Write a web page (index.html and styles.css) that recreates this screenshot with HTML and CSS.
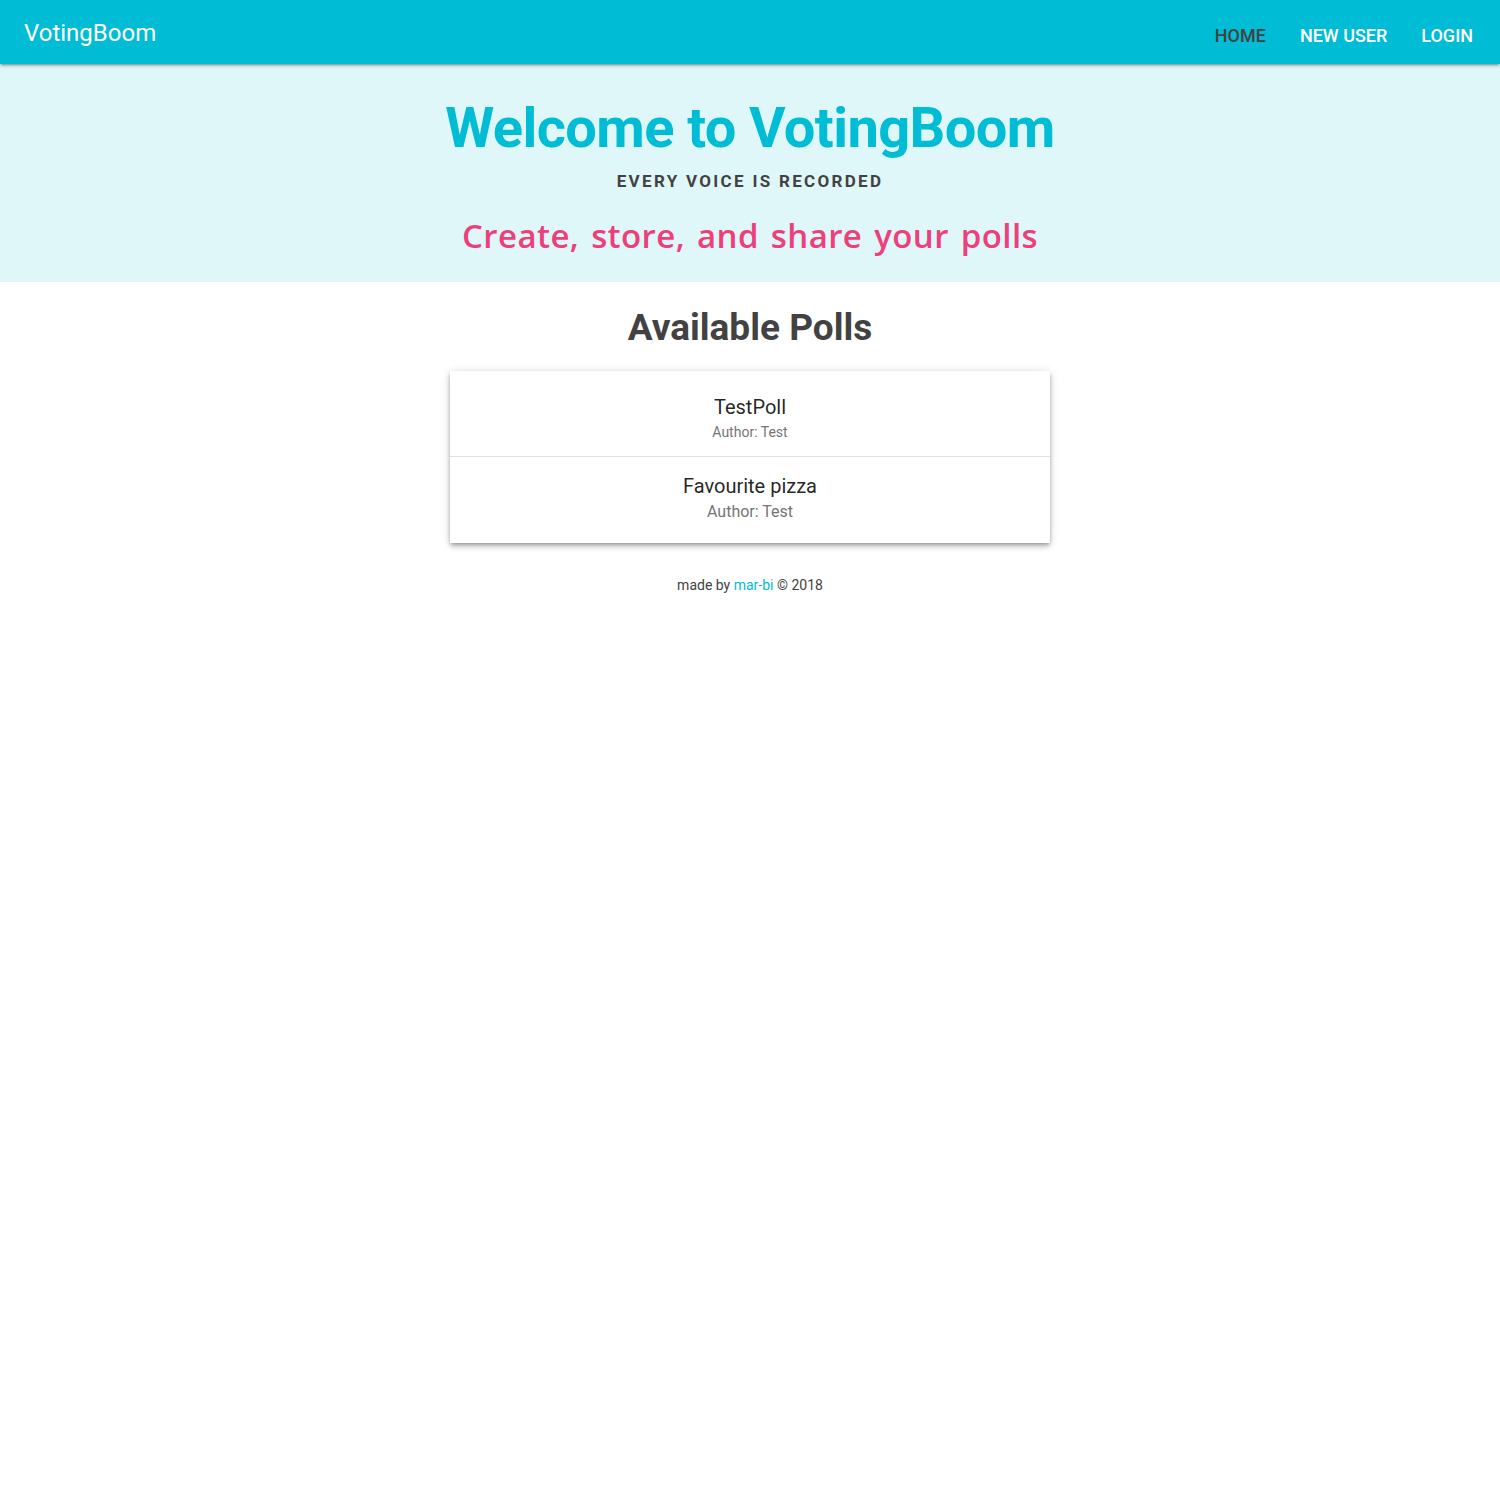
FILE: index.html
```html
<!DOCTYPE html>
<html>
<head>
<meta charset="utf-8">
<link rel="stylesheet" href="styles.css">
</head>
<body>
<nav class="navbar">
  <a class="brand" href="#">VotingBoom</a>
  <ul class="nav-links">
    <li><a class="active" href="#">HOME</a></li>
    <li><a href="#">NEW USER</a></li>
    <li><a href="#">LOGIN</a></li>
  </ul>
</nav>
<header class="hero">
  <h1 class="hero-title">Welcome to VotingBoom</h1>
  <p class="hero-sub">EVERY VOICE IS RECORDED</p>
  <p class="hero-tag">Create, store, and share your polls</p>
</header>
<main class="main">
  <h2 class="section-title">Available Polls</h2>
  <ul class="poll-list">
    <li class="poll-item">
      <div class="poll-name">TestPoll</div>
      <div class="poll-author small">Author: Test</div>
    </li>
    <li class="poll-item">
      <div class="poll-name">Favourite pizza</div>
      <div class="poll-author">Author: Test</div>
    </li>
  </ul>
  <footer class="footer">made by <a href="#">mar-bi</a> © 2018</footer>
</main>
</body>
</html>
```
FILE: styles.css
```css
* { box-sizing: border-box; }
html, body { margin: 0; padding: 0; background: #fff; }
body { font-family: Roboto, "Liberation Sans", sans-serif; color: rgba(0,0,0,0.87); }

.navbar {
  height: 64px;
  background: #00bcd4;
  display: flex;
  align-items: center;
  justify-content: space-between;
  padding: 0 10px 0 24px;
  box-shadow: 0 2px 2px 0 rgba(0,0,0,0.14), 0 3px 1px -2px rgba(0,0,0,0.12), 0 1px 5px 0 rgba(0,0,0,0.2);
  position: relative;
  z-index: 2;
}
.brand { color: #fff; text-decoration: none; font-size: 24px; line-height: 1; margin-top: 2px; }
.nav-links { list-style: none; margin: 0; padding: 0; display: flex; height: 100%; }
.nav-links li { display: flex; }
.nav-links a {
  display: flex; align-items: center;
  padding: 6px 17px 0;
  color: #fff; text-decoration: none;
  font-size: 18px; font-weight: 500;
}
.nav-links a.active { color: #424242; }

.hero {
  background: #e0f7fa;
  text-align: center;
  padding: 30px 0 24px;
}
.hero-title {
  margin: 0;
  color: #00bcd4;
  font-size: 56px;
  font-weight: 700;
  line-height: 68px;
  letter-spacing: -0.6px;
}
.hero-sub {
  margin: 8px 0 0;
  font-size: 17px;
  font-weight: 700;
  color: #424242;
  letter-spacing: 2.3px;
  line-height: 22px;
}
.hero-tag {
  margin: 22px 0 0;
  color: #ec407a;
  font-family: "Open Sans", sans-serif;
  font-size: 33px;
  font-weight: 600;
  line-height: 44px;
  letter-spacing: 0.4px;
  word-spacing: 3px;
}

.main { text-align: center; padding-top: 22px; }
.section-title {
  margin: 0;
  font-size: 37px;
  font-weight: 700;
  color: #424242;
  line-height: 48px;
}
.poll-list {
  list-style: none;
  width: 600px;
  margin: 19px auto 0;
  padding: 0;
  background: #fff;
  box-shadow: 0 4px 5px 0 rgba(0,0,0,0.14), 0 1px 10px 0 rgba(0,0,0,0.12), 0 2px 4px -1px rgba(0,0,0,0.3);
}
.poll-item { padding: 23px 20px 14px; border-bottom: 1px solid #e0e0e0; }
.poll-item:last-child { border-bottom: none; padding-top: 16px; padding-bottom: 20px; }
.poll-name { font-size: 20px; line-height: 26px; color: rgba(0,0,0,0.87); }
.poll-author { font-size: 16px; line-height: 22px; color: #757575; margin-top: 2px; }
.poll-author.small { font-size: 14px; line-height: 20px; }

.footer { margin-top: 32px; font-size: 14px; color: #424242; line-height: 20px; }
.footer a { color: #00bcd4; text-decoration: none; }
```
